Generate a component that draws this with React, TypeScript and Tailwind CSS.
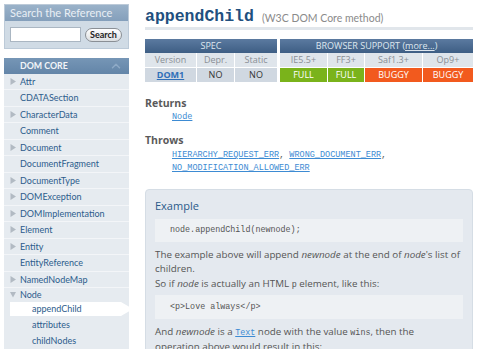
import { ChevronUp } from "lucide-react"

const navItems: { name: string; kind: "parent" | "leaf" | "open" }[] = [
    { name: "Attr", kind: "parent" },
    { name: "CDATASection", kind: "leaf" },
    { name: "CharacterData", kind: "parent" },
    { name: "Comment", kind: "leaf" },
    { name: "Document", kind: "parent" },
    { name: "DocumentFragment", kind: "leaf" },
    { name: "DocumentType", kind: "parent" },
    { name: "DOMException", kind: "parent" },
    { name: "DOMImplementation", kind: "parent" },
    { name: "Element", kind: "parent" },
    { name: "Entity", kind: "parent" },
    { name: "EntityReference", kind: "leaf" },
    { name: "NamedNodeMap", kind: "parent" },
]

const subItems = ["appendChild", "attributes", "childNodes"]

function Arrow({ open }: { open?: boolean }) {
    return (
        <svg width="6" height="7" viewBox="0 0 6 7" className="shrink-0">
            {open ? <polygon points="0,1 6,1 3,6.5" fill="#b2bac3" /> : <polygon points="0.5,0 6,3.5 0.5,7" fill="#b2bac3" />}
        </svg>
    )
}

function Sidebar() {
    return (
        <aside className="w-[125px] ml-[4px] mt-[4px] shrink-0 flex flex-col font-['Lato',sans-serif]">
            <div className="border border-[#bccad8] bg-[#d0dbe5]">
                <div className="h-[16px] bg-linear-to-b from-[#9ab2c9] to-[#849fbb] text-[#e9eff5] text-[11px] leading-[16px] pl-[5px]">
                    Search the Reference
                </div>
                <div className="h-[27px] flex items-center pl-[5px] gap-[4px]">
                    <input type="text" className="w-[71px] h-[15px] bg-white border border-[#aab6c2] outline-0" />
                    <button className="h-[14px] px-[4px] rounded-full border border-[#8a8f95] bg-linear-to-b from-white to-[#dcdfe2] text-[9px] leading-[12px] font-bold text-[#222]">
                        Search
                    </button>
                </div>
            </div>

            <div className="mt-[9px] h-[20px] bg-linear-to-b from-[#7696b6] to-[#6385a8] flex items-center justify-between pl-[16px] pr-[6px]">
                <span className="text-[#f2f5f8] text-[8.8px] font-bold">DOM CORE</span>
                <ChevronUp size={14} strokeWidth={2.5} className="text-[#8eaac6]" />
            </div>

            <ul className="bg-[#e6ebf0] text-[#2c5c8c] text-[9px]">
                {navItems.map((item) => (
                    <li key={item.name} className="h-[16.5px] flex items-center border-b border-[#f3f5f8] pl-[6px] gap-[4px]">
                        {item.kind === "parent" ? <Arrow /> : <span className="w-[6px]" />}
                        <span>{item.name}</span>
                    </li>
                ))}
                <li className="h-[13px] flex items-center pl-[6px] gap-[4px]">
                    <Arrow open />
                    <span>Node</span>
                </li>
                {subItems.map((s, i) => (
                    <li key={s} className={i === 0 ? "h-[14px] mt-px mb-px ml-[6px] -mr-[4px] flex items-center bg-white pl-[22px] [clip-path:polygon(0_0,calc(100%-12px)_0,100%_50%,calc(100%-12px)_100%,0_100%)]" : "h-[16px] flex items-center pl-[28px]"}>
                        {s}
                    </li>
                ))}
            </ul>
        </aside>
    )
}

function Main() {
    const mono = "font-['Liberation_Mono',monospace]"
    return (
        <main className="ml-[16px] w-[328px] shrink-0 font-['Open_Sans',sans-serif] text-[#555]">
            <div className="h-[30px] flex items-end gap-[8px] border-b-[3px] border-[#e1e6eb]">
                <h1 className={`${mono} text-[16.5px] leading-[20px] font-bold text-[#214f7e]`}>appendChild</h1>
                <span className="font-['Lato',sans-serif] text-[10.5px] leading-[18px] text-[#8a8a8a]">(W3C DOM Core method)</span>
            </div>

            <div className="mt-[9px] flex gap-[3px] text-[9px] text-center leading-[14px]">
                <div className="w-[132px]">
                    <div className="h-[14px] bg-linear-to-b from-[#5b7aa0] to-[#3e5e84] text-[#dfe7ef]">SPEC</div>
                    <div className="flex h-[14px] bg-[#dfe5eb] text-[#8a8f95] divide-x divide-white">
                        <div className="w-[52px]">Version</div>
                        <div className="w-[38px]">Depr.</div>
                        <div className="flex-1">Static</div>
                    </div>
                    <div className="flex h-[15px] leading-[14px] bg-[#d0d8e1] text-[#333] divide-x divide-white border-t border-white">
                        <div className="w-[52px] font-bold text-[#2f6fb8] underline">DOM1</div>
                        <div className="w-[38px]">NO</div>
                        <div className="flex-1">NO</div>
                    </div>
                </div>
                <div className="w-[193px]">
                    <div className="h-[14px] bg-linear-to-b from-[#5b7aa0] to-[#3e5e84] text-[#dfe7ef]">
                        BROWSER SUPPORT (<span className="underline">more...</span>)
                    </div>
                    <div className="flex h-[14px] bg-[#dfe5eb] text-[#8a8f95] divide-x divide-white">
                        <div className="w-[48px]">IE5.5+</div>
                        <div className="w-[37px]">FF3+</div>
                        <div className="w-[58px]">Saf1.3+</div>
                        <div className="flex-1">Op9+</div>
                    </div>
                    <div className="flex h-[15px] leading-[14px] text-white divide-x divide-white border-t border-white">
                        <div className="w-[48px] bg-[#7ab31b]">FULL</div>
                        <div className="w-[37px] bg-[#7ab31b]">FULL</div>
                        <div className="w-[58px] bg-[#f25a1e]">BUGGY</div>
                        <div className="flex-1 bg-[#f25a1e]">BUGGY</div>
                    </div>
                </div>
            </div>

            <h2 className="mt-[14px] text-[10.5px] font-bold text-[#5a5a5a] leading-[14px]">Returns</h2>
            <div className={`${mono} pl-[27px] mt-[1px] text-[8.5px] leading-[12px]`}>
                <a className="text-[#3d8bd3] underline">Node</a>
            </div>

            <h2 className="mt-[10px] text-[10.5px] font-bold text-[#5a5a5a] leading-[14px]">Throws</h2>
            <div className={`${mono} pl-[27px] mt-[2px] text-[8.5px] leading-[13px] text-[#555]`}>
                <a className="text-[#3d8bd3] underline">HIERARCHY_REQUEST_ERR</a>, <a className="text-[#3d8bd3] underline">WRONG_DOCUMENT_ERR</a>,
                <br />
                <a className="text-[#3d8bd3] underline">NO_MODIFICATION_ALLOWED_ERR</a>
            </div>

            <section className="mt-[14px] rounded-[4px] border border-[#d5dde5] bg-[#e4e9ef] pl-[9px] pr-[3px] pt-[9px] pb-[20px] text-[9.8px] leading-[14px]">
                <h3 className="text-[11px] text-[#2b5a8a] leading-[14px]">Example</h3>
                <pre className={`${mono} mt-[6px] mr-[6px] h-[23px] bg-[#eef1f4] pl-[15px] text-[8.4px] leading-[23px] text-[#555]`}>node.appendChild(newnode);</pre>
                <p className="mt-[6px]">
                    The example above will append <em>newnode</em> at the end of <em>node</em>'s list of children.
                </p>
                <p className="mt-[1px]">
                    So if <em>node</em> is actually an HTML <code className={`${mono} text-[8.4px]`}>p</code> element, like this:
                </p>
                <pre className={`${mono} mt-[3px] mr-[6px] h-[24px] bg-[#eef1f4] pl-[15px] text-[8.4px] leading-[24px] text-[#555]`}>&lt;p&gt;Love always&lt;/p&gt;</pre>
                <p className="mt-[6px]">
                    And <em>newnode</em> is a <a className={`${mono} text-[8.4px] text-[#3d8bd3] underline`}>Text</a> node with the value{" "}
                    <code className={`${mono} text-[8.4px]`}>wins</code>, then the
                    <br />
                    operation above would result in this:
                </p>
            </section>
        </main>
    )
}

export default function App() {
    return (
        <div className="w-[480px] h-[349px] overflow-hidden bg-white flex">
            <Sidebar />
            <Main />
        </div>
    )
}
